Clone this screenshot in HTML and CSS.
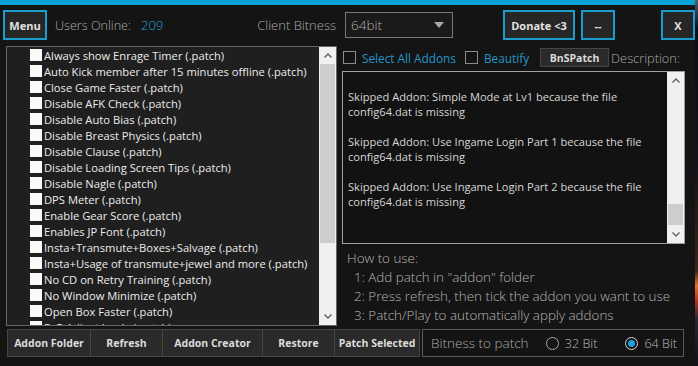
FILE: index.html
```html
<!DOCTYPE html>
<html lang="en">
<head>
    <meta charset="UTF-8">
    <title>BnS Addon Manager</title>
    <link rel="stylesheet" href="styles.css">
</head>
<body>
    <div class="window">
        <div class="titlebar">
            <button class="frame-btn menu-btn">Menu</button>
            <span class="caption users-label">Users Online:</span>
            <span class="users-count">209</span>
            <span class="caption bitness-label">Client Bitness</span>
            <div class="dropdown">
                <span>64bit</span>
                <span class="caret"></span>
            </div>
            <button class="frame-btn donate-btn">Donate &lt;3</button>
            <button class="frame-btn dash-btn">--</button>
            <button class="frame-btn close-btn">X</button>
        </div>

        <div class="main">
            <div class="addon-list">
                <ul class="rows">
                    <li><span class="box"></span>Always show Enrage Timer (.patch)</li>
                    <li><span class="box"></span>Auto Kick member after 15 minutes offline (.patch)</li>
                    <li><span class="box"></span>Close Game Faster (.patch)</li>
                    <li><span class="box"></span>Disable AFK Check (.patch)</li>
                    <li><span class="box"></span>Disable Auto Bias (.patch)</li>
                    <li><span class="box"></span>Disable Breast Physics (.patch)</li>
                    <li><span class="box"></span>Disable Clause (.patch)</li>
                    <li><span class="box"></span>Disable Loading Screen Tips (.patch)</li>
                    <li><span class="box"></span>Disable Nagle (.patch)</li>
                    <li><span class="box"></span>DPS Meter (.patch)</li>
                    <li><span class="box"></span>Enable Gear Score (.patch)</li>
                    <li><span class="box"></span>Enables JP Font (.patch)</li>
                    <li><span class="box"></span>Insta+Transmute+Boxes+Salvage (.patch)</li>
                    <li><span class="box"></span>Insta+Usage of transmute+jewel and more (.patch)</li>
                    <li><span class="box"></span>No CD on Retry Training (.patch)</li>
                    <li><span class="box"></span>No Window Minimize (.patch)</li>
                    <li><span class="box"></span>Open Box Faster (.patch)</li>
                    <li><span class="box"></span>PvP Adjust loads (.patch)</li>
                </ul>
                <div class="scrollbar">
                    <span class="arrow"><svg width="8" height="5" viewBox="0 0 8 5"><polyline points="0.5,4.5 4,1 7.5,4.5" /></svg></span>
                    <span class="track"><span class="thumb list-thumb"></span></span>
                    <span class="arrow"><svg width="8" height="5" viewBox="0 0 8 5"><polyline points="0.5,0.5 4,4 7.5,0.5" /></svg></span>
                </div>
            </div>

            <div class="side">
                <div class="options">
                    <span class="check"></span>
                    <span class="option-text">Select All Addons</span>
                    <span class="check beautify-check"></span>
                    <span class="option-text">Beautify</span>
                    <button class="plain-btn bns-btn">BnSPatch</button>
                    <span class="caption desc-label">Description:</span>
                </div>

                <div class="log">
                    <div class="log-text">
                        <p>Skipped Addon: Simple Mode at Lv1 because the file<br>config64.dat is missing</p>
                        <p>Skipped Addon: Use Ingame Login Part 1 because the file<br>config64.dat is missing</p>
                        <p>Skipped Addon: Use Ingame Login Part 2 because the file<br>config64.dat is missing</p>
                    </div>
                    <div class="scrollbar">
                        <span class="arrow"><svg width="8" height="5" viewBox="0 0 8 5"><polyline points="0.5,4.5 4,1 7.5,4.5" /></svg></span>
                        <span class="track"><span class="thumb log-thumb"></span></span>
                        <span class="arrow"><svg width="8" height="5" viewBox="0 0 8 5"><polyline points="0.5,0.5 4,4 7.5,0.5" /></svg></span>
                    </div>
                </div>

                <div class="howto">
                    <div class="howto-title">How to use:</div>
                    <div class="howto-step">1: Add patch in "addon" folder</div>
                    <div class="howto-step">2: Press refresh, then tick the addon you want to use</div>
                    <div class="howto-step">3: Patch/Play to automatically apply addons</div>
                </div>
            </div>
        </div>

        <div class="bottom">
            <div class="actions">
                <button class="plain-btn act-folder">Addon Folder</button>
                <button class="plain-btn act-refresh">Refresh</button>
                <button class="plain-btn act-creator">Addon Creator</button>
                <button class="plain-btn act-restore">Restore</button>
                <button class="plain-btn act-patch">Patch Selected</button>
            </div>
            <div class="bitness-group">
                <span class="caption group-label">Bitness to patch</span>
                <span class="radio-item radio-32"><span class="radio"></span>32 Bit</span>
                <span class="radio-item radio-64"><span class="radio checked"></span>64 Bit</span>
            </div>
        </div>
    </div>
    <div class="desktop"></div>
</body>
</html>
```

FILE: styles.css
```css
body {
    margin: 0;
    width: 698px;
    height: 366px;
    display: flex;
    overflow: hidden;
    background-color: #141414;
    font-family: "Open Sans", "Noto Sans", sans-serif;
    color: #e4e4e4;
}

.window {
    width: 695px;
    height: 366px;
    box-sizing: border-box;
    border-top: 5px solid #07a3d6;
    background-color: #141414;
}

.desktop {
    flex: 1;
    background: linear-gradient(to bottom, #4a5a70 0, #0d0d14 8%, #151219 45%, #3a2418 74%, #e0741e 78%, #b8361a 82%, #2b2532 87%, #12101a 100%);
}

/* Title bar */
.titlebar {
    display: flex;
    align-items: center;
    height: 40px;
}

.frame-btn {
    box-sizing: border-box;
    height: 30px;
    padding: 0;
    border: 2px solid #1c9ccd;
    background-color: #262626;
    color: #e2e2e2;
    font-family: "Open Sans", sans-serif;
    font-weight: 700;
    font-size: 11px;
}

.menu-btn {
    width: 44px;
    margin-left: 3px;
}

.donate-btn {
    width: 72px;
    margin-left: 50px;
}

.dash-btn {
    width: 34px;
    margin-left: 6px;
}

.close-btn {
    width: 34px;
    margin-left: 46px;
}

.caption {
    font-weight: 300;
    font-size: 13px;
    color: #a9a9a9;
    white-space: nowrap;
}

.users-label {
    margin-left: 8px;
    font-size: 12.6px;
}

.users-count {
    margin-left: 10px;
    font-weight: 300;
    font-size: 13px;
    color: #2aa0d8;
}

.bitness-label {
    margin-left: auto;
}

.dropdown {
    box-sizing: border-box;
    display: flex;
    align-items: center;
    justify-content: space-between;
    width: 108px;
    height: 26px;
    margin-left: 9px;
    padding: 0 8px 0 5px;
    border: 1px solid #777;
    background-color: #1a1a1a;
    font-weight: 300;
    font-size: 13.5px;
    color: #b0b0b0;
}

.caret {
    width: 0;
    height: 0;
    border-left: 5px solid transparent;
    border-right: 5px solid transparent;
    border-top: 6px solid #a8a8a8;
}

/* Main area */
.main {
    display: flex;
    height: 280px;
    margin-top: 1px;
    padding-left: 6px;
}

.addon-list {
    box-sizing: border-box;
    display: flex;
    width: 331px;
    height: 280px;
    border: 1px solid #666;
    background-color: #1f1f1f;
}

.rows {
    flex: 1;
    margin: 0;
    padding: 0 0 0 23px;
    list-style: none;
    overflow: hidden;
}

.rows li {
    display: flex;
    align-items: center;
    height: 16px;
    font-size: 11.2px;
    color: #ececec;
    white-space: nowrap;
}

.box {
    width: 12px;
    height: 12px;
    margin-right: 2px;
    flex-shrink: 0;
    background-color: #fafafa;
}

.scrollbar {
    display: flex;
    flex-direction: column;
    width: 17px;
    flex-shrink: 0;
    background-color: #f0f0f0;
}

.arrow {
    display: flex;
    align-items: center;
    justify-content: center;
    height: 17px;
}

.arrow polyline {
    fill: none;
    stroke: #606060;
    stroke-width: 1.4;
}

.track {
    flex: 1;
    position: relative;
}

.thumb {
    position: absolute;
    left: 1px;
    right: 1px;
    background-color: #cdcdcd;
}

.list-thumb {
    top: 0;
    height: 179px;
}

.log-thumb {
    top: 115px;
    height: 21px;
}

/* Right side */
.side {
    width: 343px;
    margin-left: 5px;
}

.options {
    display: flex;
    align-items: center;
    height: 19px;
    margin-top: 2px;
    white-space: nowrap;
}

.check {
    box-sizing: border-box;
    width: 13px;
    height: 13px;
    margin-left: 1px;
    flex-shrink: 0;
    border: 1px solid #8c8c8c;
}

.beautify-check {
    margin-left: 9px;
}

.option-text {
    margin-left: 6px;
    font-size: 11.8px;
    color: #2396c9;
}

.plain-btn {
    box-sizing: border-box;
    height: 28px;
    padding: 0;
    border: 1px solid #454545;
    background-color: #2a2a2a;
    color: #dcdcdc;
    font-family: "Open Sans", sans-serif;
    font-weight: 700;
    font-size: 10.5px;
    white-space: nowrap;
}

.bns-btn {
    width: 69px;
    height: 19px;
    margin-left: 11px;
    flex-shrink: 0;
}

.desc-label {
    margin-left: 2px;
    font-size: 12.8px;
}

.log {
    box-sizing: border-box;
    display: flex;
    height: 173px;
    margin-top: 4px;
    border: 1px solid #a0a0a0;
    background-color: #121212;
}

.log-text {
    flex: 1;
    padding-left: 5px;
    font-size: 11.1px;
    line-height: 15px;
    color: #d6d6d6;
}

.log-text p {
    margin: 15px 0 0;
    white-space: nowrap;
}

.log-text p:first-child {
    margin-top: 17px;
}

.howto {
    margin-top: 5px;
    font-weight: 300;
    font-size: 13.4px;
    line-height: 19px;
    color: #b4b4b4;
    white-space: nowrap;
}

.howto-title {
    padding-left: 5px;
}

.howto-step {
    padding-left: 12px;
}

/* Bottom bar */
.bottom {
    display: flex;
    height: 28px;
    margin-top: 3px;
    padding-left: 7px;
}

.actions {
    display: flex;
}

.actions .plain-btn + .plain-btn {
    margin-left: -1px;
}

.act-folder { width: 84px; }
.act-refresh { width: 73px; }
.act-creator { width: 101px; }
.act-restore { width: 73px; }
.act-patch { width: 86px; }

.bitness-group {
    box-sizing: border-box;
    display: flex;
    align-items: center;
    width: 262px;
    margin-left: 2px;
    padding: 0 6px 0 8px;
    border: 1px solid #5a5a5a;
}

.group-label {
    font-size: 13.5px;
}

.radio-item {
    display: flex;
    align-items: center;
    font-weight: 300;
    font-size: 12.6px;
    color: #b9b9b9;
}

.radio-32 {
    margin-left: auto;
}

.radio-64 {
    margin-left: 28px;
}

.radio {
    box-sizing: border-box;
    display: flex;
    align-items: center;
    justify-content: center;
    width: 13px;
    height: 13px;
    margin-right: 6px;
    border: 1px solid #a8a8a8;
    border-radius: 50%;
}

.radio.checked {
    border-color: #d6d6d6;
}

.radio.checked::after {
    content: "";
    width: 7px;
    height: 7px;
    border-radius: 50%;
    background-color: #1aa3e0;
}
```
